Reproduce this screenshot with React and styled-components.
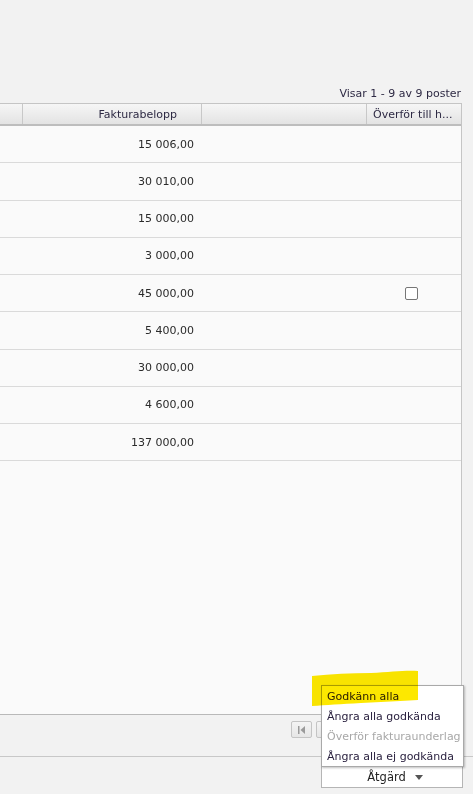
import React from "react";
import styled, { createGlobalStyle } from "styled-components";

const Global = createGlobalStyle`
  html, body { margin: 0; padding: 0; background: #f2f2f2; }
  body { font-family: "DejaVu Sans", Verdana, sans-serif; font-size: 11px; color: #2a2a2a; }
  * { box-sizing: border-box; }
`;

const Page = styled.div`
  position: relative;
  width: 473px;
  height: 794px;
  display: flex;
  flex-direction: column;
  overflow: hidden;
  background: #f2f2f2;
`;

const Info = styled.div`
  height: 103px;
  width: 462px;
  display: flex;
  align-items: flex-end;
  justify-content: flex-end;
  padding-bottom: 3px;
  padding-right: 1px;
  color: #2e2a44;
  font-size: 11px;
`;

const Grid = styled.div`
  width: 462px;
  height: 612px;
  display: flex;
  flex-direction: column;
  border-right: 1px solid #c5c5c5;
  border-top: 1px solid #c5c5c5;
  border-bottom: 1px solid #b9b9b9;
  background: #fafafa;
`;

const Header = styled.div`
  display: grid;
  grid-template-columns: 22px 179px 165px 1fr;
  height: 22px;
  border-bottom: 2px solid #bdbdbd;
  background: linear-gradient(#f6f6f6, #e3e3e3);
`;

const HeadCell = styled.div`
  display: flex;
  align-items: center;
  justify-content: ${(p) => p.$align || "flex-start"};
  padding: ${(p) => p.$pad || "0 6px"};
  border-left: ${(p) => (p.$first ? "none" : "1px solid #c8c8c8")};
  color: #2e2a44;
  white-space: nowrap;
  overflow: hidden;
`;

const Body = styled.div`
  flex: 1;
  display: flex;
  flex-direction: column;
`;

const Row = styled.div`
  display: grid;
  grid-template-columns: 22px 179px 165px 1fr;
  height: 37.25px;
  border-bottom: 1px solid #dadada;
  flex-shrink: 0;
`;

const Cell = styled.div`
  display: flex;
  align-items: center;
  justify-content: ${(p) => p.$align || "flex-start"};
  padding: ${(p) => p.$pad || "0 6px"};
  color: #2a2a2a;
`;

const Check = styled.span`
  width: 13px;
  height: 13px;
  border: 1px solid #767676;
  border-radius: 2px;
  background: #fff;
  display: inline-block;
`;

const Pager = styled.div`
  height: 42px;
  width: 473px;
  border-bottom: 1px solid #c8c8c8;
  display: flex;
  align-items: flex-start;
  padding: 6px 0 0 291px;
  gap: 4px;
`;

const PagerBtn = styled.div`
  width: 21px;
  height: 17px;
  border: 1px solid #c4c4c4;
  border-radius: 2px;
  background: linear-gradient(#f4f4f4, #e6e6e6);
  display: flex;
  align-items: center;
  justify-content: center;
`;

const Footer = styled.div`
  flex: 1;
  display: flex;
  align-items: flex-start;
  padding: 10px 0 0 321px;
`;

const ActionWrap = styled.div`
  position: relative;
`;

const ActionBtn = styled.div`
  width: 142px;
  height: 21px;
  border: 1px solid #b5b5b5;
  border-top: none;
  background: #fff;
  display: flex;
  align-items: center;
  justify-content: center;
  gap: 9px;
  color: #222;
  font-size: 11.5px;
  padding-left: 6px;
`;

const Caret = styled.span`
  width: 0;
  height: 0;
  border-left: 4px solid transparent;
  border-right: 4px solid transparent;
  border-top: 5px solid #555;
`;

const Menu = styled.div`
  position: absolute;
  left: 0;
  bottom: 100%;
  width: 143px;
  height: 82px;
  background: #fff;
  border: 1px solid #a9a9a9;
  box-shadow: 1px 1px 2px rgba(0,0,0,0.25);
  padding-top: 1px;
  display: flex;
  flex-direction: column;
`;

const MenuItem = styled.div`
  height: 20px;
  display: flex;
  align-items: center;
  padding-left: 5px;
  white-space: nowrap;
  font-size: 11px;
  color: ${(p) => (p.$disabled ? "#a8a8a8" : "#2b2240")};
`;

const Highlight = styled.svg`
  position: absolute;
  left: 311px;
  top: 669px;
  mix-blend-mode: multiply;
  pointer-events: none;
`;

const rows = [
  "15 006,00",
  "30 010,00",
  "15 000,00",
  "3 000,00",
  "45 000,00",
  "5 400,00",
  "30 000,00",
  "4 600,00",
  "137 000,00",
];

export default function App() {
  return (
    <Page>
      <Global />
      <Info>Visar 1 - 9 av 9 poster</Info>
      <Grid>
        <Header>
          <HeadCell $first />
          <HeadCell $align="flex-end" $pad="0 24px 0 0">Fakturabelopp</HeadCell>
          <HeadCell />
          <HeadCell>Överför till h...</HeadCell>
        </Header>
        <Body>
          {rows.map((v, i) => (
            <Row key={i}>
              <Cell />
              <Cell $align="flex-end" $pad="0 7px 0 0">{v}</Cell>
              <Cell />
              <Cell $align="flex-start" $pad="0 0 0 39px">{i === 4 && <Check />}</Cell>
            </Row>
          ))}
        </Body>
      </Grid>
      <Pager>
        <PagerBtn>
          <svg width="9" height="10" viewBox="0 0 9 10">
            <rect x="1" y="1" width="1.5" height="8" fill="#9a9a9a" />
            <path d="M8 1 L3.5 5 L8 9 Z" fill="#9a9a9a" />
          </svg>
        </PagerBtn>
        <PagerBtn />
      </Pager>
      <Footer>
        <ActionWrap>
          <Menu>
            <MenuItem>Godkänn alla</MenuItem>
            <MenuItem>Ångra alla godkända</MenuItem>
            <MenuItem $disabled>Överför fakturaunderlag</MenuItem>
            <MenuItem>Ångra alla ej godkända</MenuItem>
          </Menu>
          <ActionBtn>
            Åtgärd <Caret />
          </ActionBtn>
        </ActionWrap>
      </Footer>
      <Highlight width="110" height="40" viewBox="0 0 110 40">
        <path
          d="M1 7 C20 5 40 4 60 4 C80 3 95 1 107 2 L107 31 C90 32 70 33 50 34 C30 35 15 36 1 37 Z"
          fill="#fde800"
        />
      </Highlight>
    </Page>
  );
}
